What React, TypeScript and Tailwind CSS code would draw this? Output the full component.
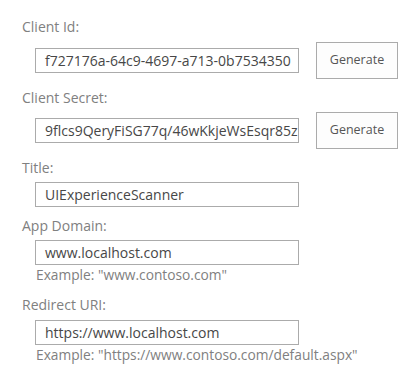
import React from "react";

const font = { fontFamily: '"Open Sans", "Noto Sans", sans-serif' };

function Label({ children, className = "" }: { children: React.ReactNode; className?: string }) {
  return <div className={`text-[14px] leading-[18px] text-[#808080] ${className}`}>{children}</div>;
}

function Box({ value }: { value: string }) {
  return (
    <div className="w-[264px] h-[25px] border border-[#ababab] bg-white pl-[9px] pr-[2px] text-[14px] leading-[23px] text-[#474747] overflow-hidden whitespace-nowrap">
      {value}
    </div>
  );
}

function Hint({ children }: { children: React.ReactNode }) {
  return <div className="ml-[14px] mt-[1px] text-[13.75px] leading-[18px] text-[#808080]">{children}</div>;
}

function GenerateRow({ value }: { value: string }) {
  return (
    <div className="flex items-center ml-[13px]">
      <Box value={value} />
      <button className="ml-[17px] w-[82px] h-[37px] border border-[#ababab] bg-[#fdfdfd] text-[12.5px] text-[#555555]">
        Generate
      </button>
    </div>
  );
}

export default function App() {
  return (
    <div className="w-[405px] h-[388px] bg-white pl-[22px] pt-[18px]" style={font}>
      <Label>Client Id:</Label>
      <div className="mt-[6px]">
        <GenerateRow value="f727176a-64c9-4697-a713-0b7534350" />
      </div>
      <Label className="mt-[10px]">Client Secret:</Label>
      <div className="mt-[5px]">
        <GenerateRow value="9flcs9QeryFiSG77q/46wKkjeWsEsqr85z" />
      </div>
      <Label className="mt-[10px]">Title:</Label>
      <div className="mt-[5px] ml-[13px]">
        <Box value="UIExperienceScanner" />
      </div>
      <Label className="mt-[10px]">App Domain:</Label>
      <div className="mt-[5px] ml-[13px]">
        <Box value="www.localhost.com" />
      </div>
      <Hint>Example: "www.contoso.com"</Hint>
      <Label className="mt-[12px]">Redirect URI:</Label>
      <div className="mt-[6px] ml-[13px]">
        <Box value="https://www.localhost.com" />
      </div>
      <Hint>Example: "https://www.contoso.com/default.aspx"</Hint>
    </div>
  );
}
